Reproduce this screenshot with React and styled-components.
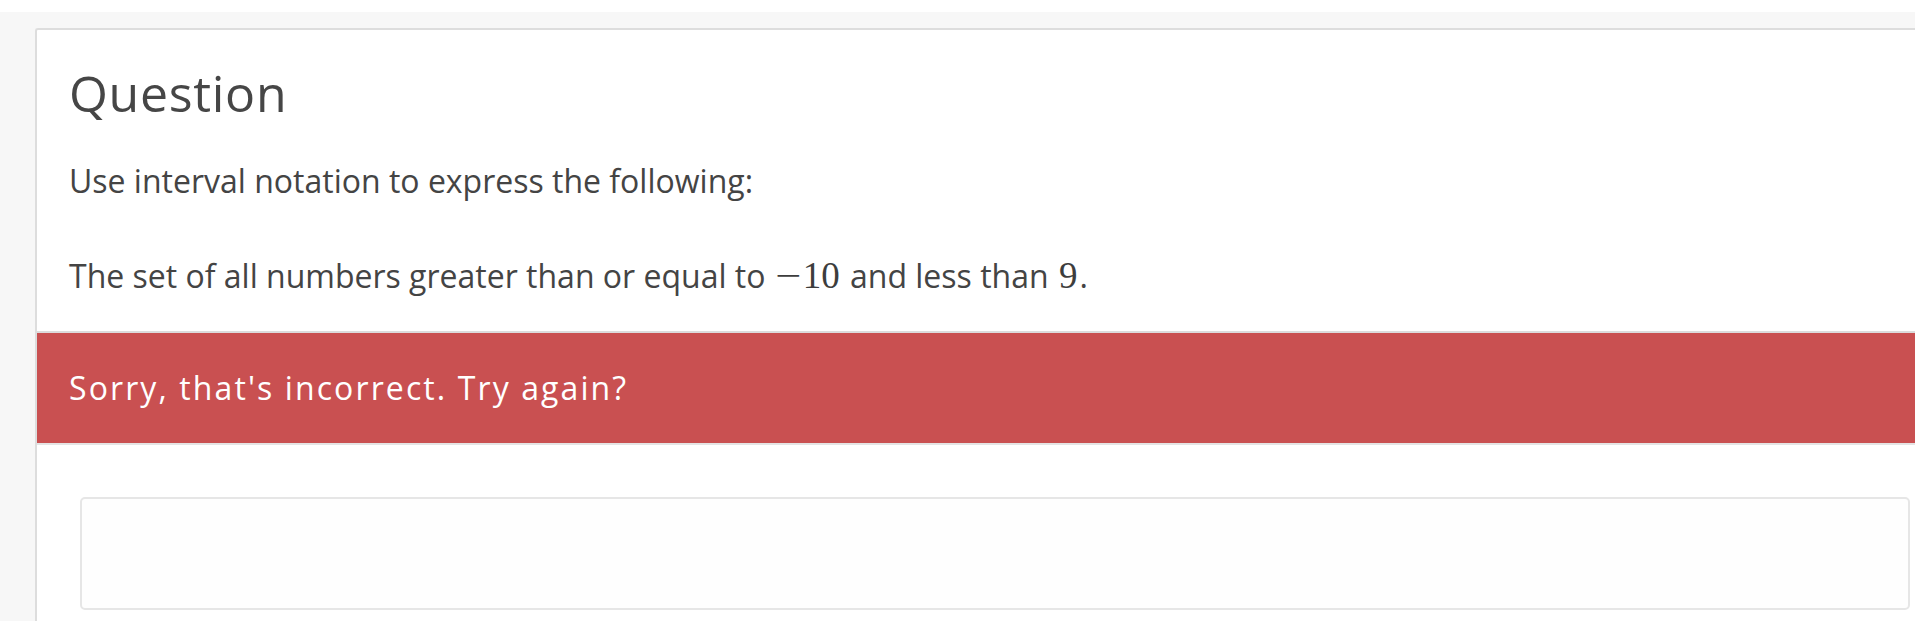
import React from "react";
import styled, { createGlobalStyle } from "styled-components";

const GlobalStyle = createGlobalStyle`
  html, body {
    margin: 0;
    padding: 0;
    background: #ffffff;
    overflow: hidden;
  }
  body {
    font-family: "Open Sans", "Liberation Sans", sans-serif;
  }
`;

const Page = styled.div`
  margin-top: 12px;
  min-height: 609px;
  background: #f7f7f7;
  padding: 16px 0 0 35px;
  box-sizing: border-box;
`;

const Card = styled.div`
  width: 1918px;
  min-height: 600px;
  background: #ffffff;
  border-top: 2px solid #dddddd;
  border-left: 2px solid #dddddd;
  border-top-left-radius: 3px;
`;

const QuestionArea = styled.div`
  padding: 33px 32px 31px;
  color: #444444;
`;

const Title = styled.h2`
  margin: 0 0 34px;
  font-size: 50px;
  font-weight: 400;
  line-height: 60px;
  letter-spacing: 0.7px;
  color: #464646;
`;

const Para = styled.p`
  margin: ${(p) => (p.$last ? "0" : "0 0 47px")};
  font-size: 32px;
  line-height: 48px;
  color: #444444;
`;

const MathNum = styled.span`
  margin: 0 2px;
  font-family: "Liberation Serif", "DejaVu Serif", serif;
  font-size: 37px;
  color: #3d3d3d;
`;

const MathMinus = styled.span`
  display: inline-block;
  padding: 0 4px 0 2px;
  transform: scaleX(1.25);
`;

const Banner = styled.div`
  background: #c95051;
  border-top: 2px solid #dcdcdc;
  border-bottom: 2px solid #e4e4e4;
  padding: 31px 32px;
  color: #ffffff;
  font-size: 32px;
  font-weight: 500;
  line-height: 48px;
  letter-spacing: 2.1px;
`;

const AnswerArea = styled.div`
  padding: 52px 43px 20px;
`;

const AnswerBox = styled.div`
  width: 1830px;
  height: 113px;
  box-sizing: border-box;
  border: 2px solid #e6e6e6;
  border-radius: 5px;
  background: #fefefe;
`;

export default function App() {
  return (
    <>
      <GlobalStyle />
      <Page>
        <Card>
          <QuestionArea>
            <Title>Question</Title>
            <Para>Use interval notation to express the following:</Para>
            <Para $last>
              The set of all numbers greater than or equal to{" "}
              <MathNum>
                <MathMinus>−</MathMinus>10
              </MathNum>{" "}
              and less than <MathNum>9</MathNum>.
            </Para>
          </QuestionArea>
          <Banner>Sorry, that's incorrect. Try again?</Banner>
          <AnswerArea>
            <AnswerBox />
          </AnswerArea>
        </Card>
      </Page>
    </>
  );
}
